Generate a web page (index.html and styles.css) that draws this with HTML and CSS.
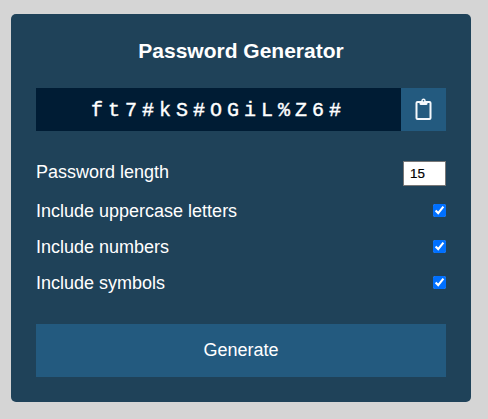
FILE: index.html
```html
<!DOCTYPE html>
<html lang="en">
<head>
<meta charset="utf-8">
<title>Password Generator</title>
<link rel="stylesheet" href="styles.css">
</head>
<body>
<main class="card">
  <h1 class="title">Password Generator</h1>
  <div class="result">
    <span class="password">ft7#kS#OGiL%Z6#</span>
    <button class="copy" aria-label="Copy">
      <svg width="17" height="23" viewBox="0 0 17 23" fill="none" stroke="#f4f8fc" stroke-width="2"><rect x="1.5" y="4" width="14" height="17" rx="1"/><path d="M4.500 3.200h8v2.500q0 1.300-1.300 1.300H5.800Q4.500 7 4.500 5.700z" fill="#f4f8fc" stroke="none"/><circle cx="8.500" cy="2.800" r="1.500" stroke-width="1.400" fill="#235a7f"/></svg>
    </button>
  </div>
  <div class="settings">
    <label class="row length"><span>Password length</span><input class="number" type="text" value="15"></label>
    <label class="row"><span>Include uppercase letters</span><input class="check" type="checkbox" checked></label>
    <label class="row"><span>Include numbers</span><input class="check" type="checkbox" checked></label>
    <label class="row"><span>Include symbols</span><input class="check" type="checkbox" checked></label>
  </div>
  <button class="generate">Generate</button>
</main>
</body>
</html>
```
FILE: styles.css
```css
* { box-sizing: border-box; }
body { margin: 0; padding: 14px 17px 17px 11px; height: 419px; background: #d5d5d5; font-family: "Liberation Sans", Arial, sans-serif; color: #fff; overflow: hidden; }
.card { width: 460px; height: 388px; padding: 25px; border-radius: 5px; background: #1f4259; }
.title { margin: 0 0 25px; font-size: 21px; line-height: 24px; text-align: center; }
.result { display: flex; height: 43px; background: #001c34; }
.password { flex: 1; padding-top: 2px; font: 20px/41px "Liberation Mono", monospace; line-height: 42px; letter-spacing: 5px; text-align: center; -webkit-text-stroke: 0.4px #fff; }
.copy { width: 45px; padding: 0; border: 0; background: #235a7f; display: grid; place-items: center; }
.settings { margin-top: 29px; }
.row { display: flex; justify-content: space-between; align-items: center; height: 36px; font-size: 18px; }
.length { height: 27px; margin-bottom: 6px; }
.length span { padding-bottom: 2px; }
.number { width: 43px; height: 25px; border: 1px solid #777; padding: 0 6px; font: 13.333px "Liberation Sans", sans-serif; -webkit-text-stroke: 0.2px #000; }
.check { width: 13px; height: 13px; margin: 0 0 2px; accent-color: #0070ff; }
.generate { display: block; width: 100%; height: 53px; margin-top: 23px; border: 0; background: #235a7f; color: #fff; font: 18px "Liberation Sans", sans-serif; }
```
